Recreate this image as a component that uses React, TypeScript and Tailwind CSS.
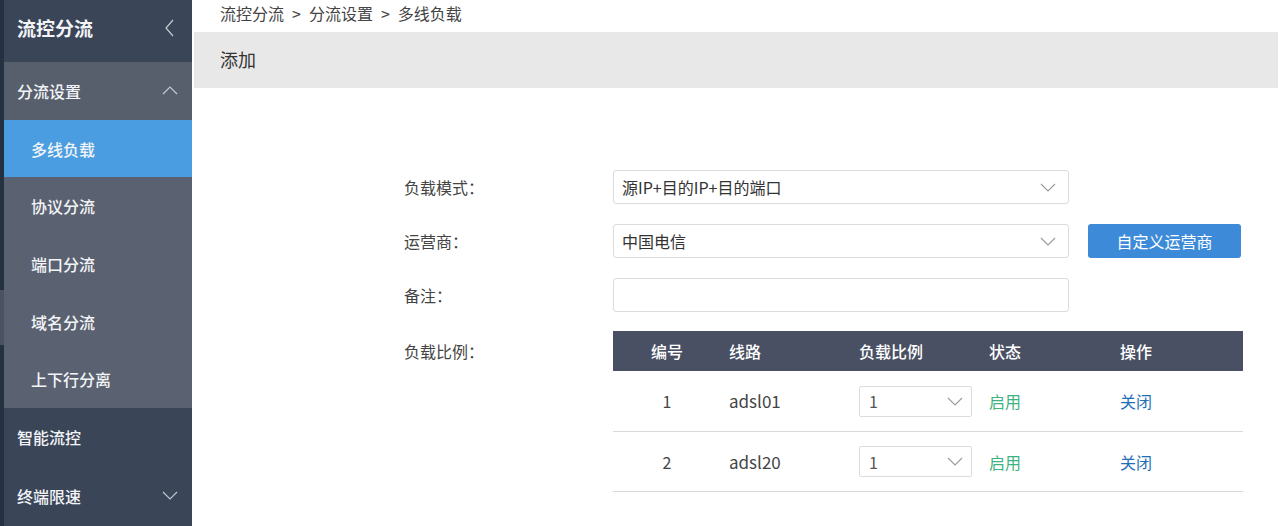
import React from "react";

const font = { fontFamily: '"Noto Sans CJK SC", "Noto Sans", sans-serif' };

function ChevronDown({ className = "" }: { className?: string }) {
  return (
    <svg className={className} width="16" height="9" viewBox="0 0 16 9" fill="none">
      <path d="M1 1 L8 8 L15 1" stroke="currentColor" strokeWidth="1.1" />
    </svg>
  );
}
function ChevronUp({ className = "" }: { className?: string }) {
  return (
    <svg className={className} width="16" height="9" viewBox="0 0 16 9" fill="none">
      <path d="M1 8 L8 1 L15 8" stroke="currentColor" strokeWidth="1.2" />
    </svg>
  );
}
function ChevronLeft({ className = "" }: { className?: string }) {
  return (
    <svg className={className} width="9" height="18" viewBox="0 0 9 18" fill="none">
      <path d="M8 1 L1 9 L8 17" stroke="currentColor" strokeWidth="1.2" />
    </svg>
  );
}

function Select({ value, w }: { value: string; w: string }) {
  return (
    <div className={`${w} h-[34px] border border-[#dcdcdc] rounded-[3px] bg-white flex items-center justify-between pl-[8px] pr-[12px]`}>
      <span className="text-[16px] text-[#333]">{value}</span>
      <ChevronDown className="text-[#9a9a9a]" />
    </div>
  );
}

export default function App() {
  const subItems = ["协议分流", "端口分流", "域名分流", "上下行分离"];
  const rows = [
    { id: "1", line: "adsl01" },
    { id: "2", line: "adsl20" },
  ];
  return (
    <div className="w-[1280px] h-[526px] flex bg-white overflow-hidden" style={font}>
      {/* sidebar */}
      <div className="w-[4px] h-full flex flex-col bg-[#243141]">
        <div className="h-[290px]" />
        <div className="h-[55px] bg-[#4b5261]" />
      </div>
      <div className="w-[188px] h-full flex flex-col text-[#f2f4f7]">
        <div className="h-[62px] bg-[#3a4557] flex items-center justify-between pl-[13px] pr-[18px] pb-[6px]">
          <span className="text-[19px] font-bold">流控分流</span>
          <ChevronLeft className="text-[#c5cad3]" />
        </div>
        <div className="h-[57.7px] bg-[#575e6c] flex items-center justify-between pl-[13px] pr-[14px]">
          <span className="text-[16px] font-medium">分流设置</span>
          <ChevronUp className="text-[#c5cad3]" />
        </div>
        <div className="h-[57.7px] bg-[#4a9de0] flex items-center pl-[27px]">
          <span className="text-[16px] font-medium">多线负载</span>
        </div>
        {subItems.map((s) => (
          <div key={s} className="h-[57.7px] bg-[#5a6170] flex items-center pl-[27px]">
            <span className="text-[16px] font-medium">{s}</span>
          </div>
        ))}
        <div className="h-[57.7px] bg-[#3a4557] flex items-center pl-[13px]">
          <span className="text-[16px] font-medium">智能流控</span>
        </div>
        <div className="flex-1 bg-[#3a4557] flex items-center justify-between pl-[13px] pr-[14px]">
          <span className="text-[16px] font-medium">终端限速</span>
          <ChevronDown className="text-[#c5cad3]" />
        </div>
      </div>

      {/* main */}
      <div className="flex-1 flex flex-col pl-[2px]">
        <div className="h-[32px] flex items-center pl-[26px] pb-[6px] text-[16px] text-[#444]">
          <span>流控分流</span>
          <span className="mx-[8px]">&gt;</span>
          <span>分流设置</span>
          <span className="mx-[8px]">&gt;</span>
          <span>多线负载</span>
        </div>
        <div className="h-[56px] bg-[#e8e8e8] flex items-center pl-[26px] mr-[2px] pb-[2px] text-[18px] text-[#333]">
          添加
        </div>

        <div className="mt-[82px] ml-[210px] flex flex-col gap-[20px] text-[16px] text-[#444]">
          <div className="flex items-center">
            <div className="w-[209px]">负载模式：</div>
            <Select value="源IP+目的IP+目的端口" w="w-[456px]" />
          </div>
          <div className="flex items-center">
            <div className="w-[209px]">运营商：</div>
            <Select value="中国电信" w="w-[456px]" />
            <button className="ml-[19px] w-[153px] h-[34px] bg-[#3d8bd8] rounded-[3px] text-white text-[16px]">
              自定义运营商
            </button>
          </div>
          <div className="flex items-center">
            <div className="w-[209px]">备注：</div>
            <div className="w-[456px] h-[34px] border border-[#dcdcdc] rounded-[3px] bg-white" />
          </div>
          <div className="flex items-start -mt-[1px]">
            <div className="w-[209px] h-[40px] flex items-center">负载比例：</div>
            <div className="w-[630px] flex flex-col">
              <div className="h-[40px] bg-[#4a5063] flex items-center text-white text-[16px] font-medium">
                <div className="w-[108px] text-center">编号</div>
                <div className="w-[130px] pl-[8px]">线路</div>
                <div className="w-[130px] pl-[8px]">负载比例</div>
                <div className="w-[131px] pl-[8px]">状态</div>
                <div className="w-[131px] pl-[8px]">操作</div>
              </div>
              {rows.map((r, i) => (
                <div key={r.id} className={`${i === 0 ? "h-[61px]" : "h-[60px]"} border-b border-[#d9d9d9] flex items-center text-[16px] text-[#444]`}>
                  <div className="w-[108px] text-center">{r.id}</div>
                  <div className="w-[130px] pl-[8px] text-[17px]">{r.line}</div>
                  <div className="w-[130px] pl-[8px]">
                    <div className="w-[113px] h-[31px] border border-[#dcdcdc] rounded-[2px] flex items-center justify-between pl-[9px] pr-[8px] text-[#555]">
                      <span>1</span>
                      <ChevronDown className="text-[#9a9a9a]" />
                    </div>
                  </div>
                  <div className="w-[131px] pl-[8px] text-[#3fb27f]">启用</div>
                  <div className="w-[131px] pl-[8px] text-[#1f6fb5]">关闭</div>
                </div>
              ))}
            </div>
          </div>
        </div>
      </div>
    </div>
  );
}
